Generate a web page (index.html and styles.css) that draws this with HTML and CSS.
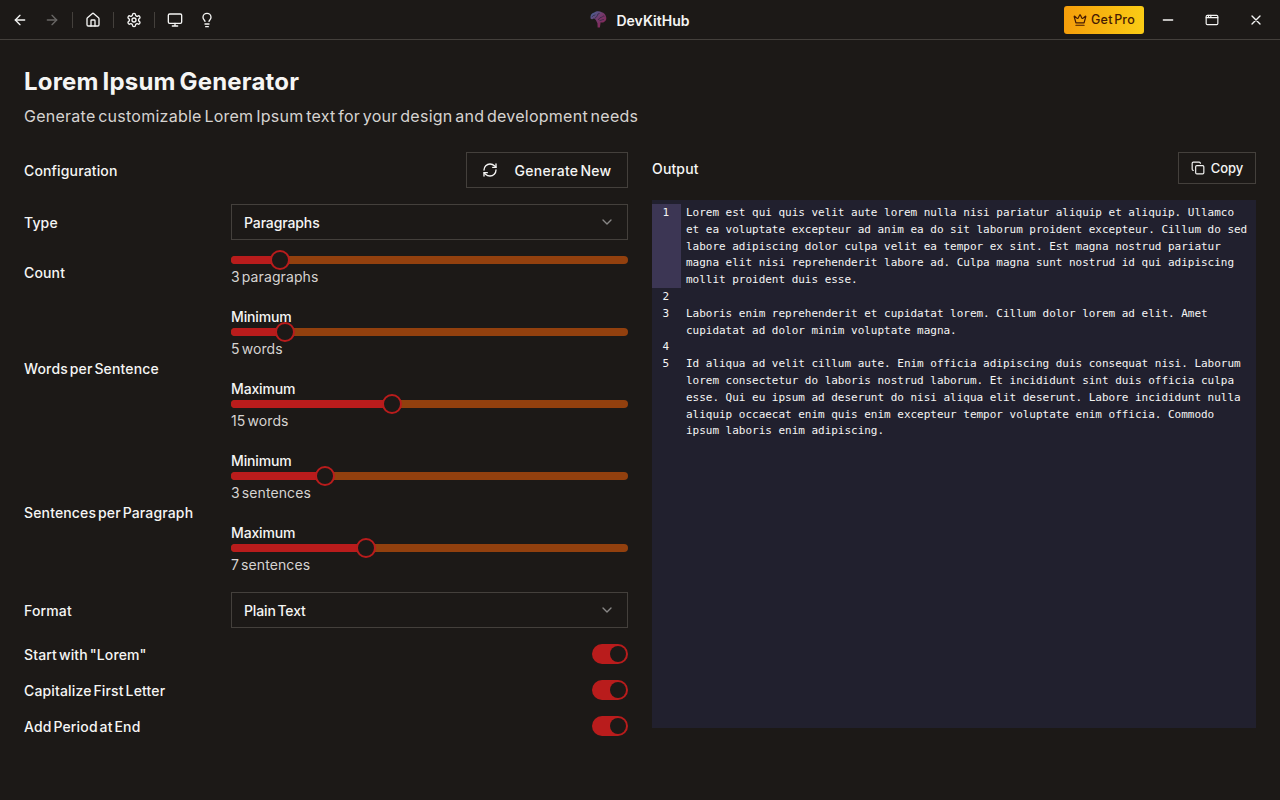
FILE: index.html
```
<!DOCTYPE html>
<html lang="en">
<head>
    <meta charset="UTF-8">
    <meta name="viewport" content="width=device-width, initial-scale=1.0">
    <title>DevKitHub</title>
    <link rel="stylesheet" href="styles.css">
</head>
<body>
    <header class="titlebar">
        <nav class="nav">
            <button class="icon-btn" aria-label="Back"><svg class="icon" viewBox="0 0 24 24"><path d="m12 19-7-7 7-7"/><path d="M19 12H5"/></svg></button>
            <button class="icon-btn disabled" aria-label="Forward"><svg class="icon" viewBox="0 0 24 24"><path d="M5 12h14"/><path d="m12 5 7 7-7 7"/></svg></button>
            <span class="divider"></span>
            <button class="icon-btn" aria-label="Home"><svg class="icon" viewBox="0 0 24 24"><path d="M15 21v-8a1 1 0 0 0-1-1h-4a1 1 0 0 0-1 1v8"/><path d="M3 10a2 2 0 0 1 .709-1.528l7-5.999a2 2 0 0 1 2.582 0l7 5.999A2 2 0 0 1 21 10v9a2 2 0 0 1-2 2H5a2 2 0 0 1-2-2z"/></svg></button>
            <span class="divider"></span>
            <button class="icon-btn" aria-label="Settings"><svg class="icon" viewBox="0 0 24 24"><path d="M12.22 2h-.44a2 2 0 0 0-2 2v.18a2 2 0 0 1-1 1.73l-.43.25a2 2 0 0 1-2 0l-.15-.08a2 2 0 0 0-2.73.73l-.22.38a2 2 0 0 0 .73 2.73l.15.1a2 2 0 0 1 1 1.72v.51a2 2 0 0 1-1 1.74l-.15.09a2 2 0 0 0-.73 2.73l.22.38a2 2 0 0 0 2.73.73l.15-.08a2 2 0 0 1 2 0l.43.25a2 2 0 0 1 1 1.73V20a2 2 0 0 0 2 2h.44a2 2 0 0 0 2-2v-.18a2 2 0 0 1 1-1.73l.43-.25a2 2 0 0 1 2 0l.15.08a2 2 0 0 0 2.73-.73l.22-.39a2 2 0 0 0-.73-2.73l-.15-.08a2 2 0 0 1-1-1.74v-.5a2 2 0 0 1 1-1.74l.15-.09a2 2 0 0 0 .73-2.73l-.22-.38a2 2 0 0 0-2.73-.73l-.15.08a2 2 0 0 1-2 0l-.43-.25a2 2 0 0 1-1-1.73V4a2 2 0 0 0-2-2z"/><circle cx="12" cy="12" r="3"/></svg></button>
            <span class="divider"></span>
            <button class="icon-btn" aria-label="Display"><svg class="icon" viewBox="0 0 24 24"><rect width="20" height="14" x="2" y="3" rx="2"/><path d="M8 21h8M12 17v4"/></svg></button>
            <button class="icon-btn" aria-label="Tips"><svg class="icon" viewBox="0 0 24 24"><path d="M15 14c.2-1 .7-1.7 1.5-2.5 1-.9 1.5-2.2 1.5-3.5A6 6 0 0 0 6 8c0 1 .2 2.2 1.5 3.5.7.7 1.3 1.5 1.5 2.5"/><path d="M9 18h6M10 22h4"/></svg></button>
        </nav>
        <div class="brand">
            <svg class="brand-logo" viewBox="0 0 16 16">
                <defs>
                    <linearGradient id="brain" x1="0" y1="0" x2="1" y2="1">
                        <stop offset="0" stop-color="#3e6a9c"/>
                        <stop offset=".45" stop-color="#743a6c"/>
                        <stop offset="1" stop-color="#8c1f50"/>
                    </linearGradient>
                </defs>
                <path fill="url(#brain)" d="M.5 7C0 4 1.500 2 4 1.500 6 0 9 0 11 1.200c2 .3 3.500 2 4 4 .8 2 .3 4-1.500 4.800-1 .9-2.500.9-3.500.6L9.300 15.500H7.200L7 11.500 5.500 8.500C4.500 7 3.500 6.500 2.600 7.500 2 8 1 7.700.5 7z"/>
                <path class="brain-folds" d="M2 5.500c1-2 2-1 3-2M5 7c0-2 2-1 2-3S9 3 9 2M7.500 8c2 0 1-2 3-2s1-2 3-1M9 9c2 0 2-1 4-1"/>
            </svg>
            <span class="label">DevKitHub</span>
        </div>
        <div class="window-controls">
            <button class="pro-btn"><svg class="icon crown" viewBox="0 0 24 24"><path d="M11.562 3.266a.5.5 0 0 1 .876 0L15.390 8.870a1 1 0 0 0 1.516.294L21.183 5.500a.5.5 0 0 1 .798.519l-2.834 10.246a1 1 0 0 1-.956.734H5.810a1 1 0 0 1-.957-.734L2.020 6.020a.5.5 0 0 1 .798-.519l4.276 3.664a1 1 0 0 0 1.516-.294z"/><path d="M5 21h14"/></svg><span>Get Pro</span></button>
            <button class="win-btn" aria-label="Minimize"><svg class="icon" viewBox="0 0 24 24"><path d="M5 12h14"/></svg></button>
            <button class="win-btn" aria-label="Maximize"><svg class="icon small" viewBox="0 0 24 24"><rect x="2" y="4" width="20" height="16" rx="2"/><path d="M10 4v4M2 8h20M6 4v4"/></svg></button>
            <button class="win-btn" aria-label="Close"><svg class="icon" viewBox="0 0 24 24"><path d="M18 6 6 18M6 6l12 12"/></svg></button>
        </div>
    </header>

    <main class="page">
        <h1>Lorem Ipsum Generator</h1>
        <p class="description">Generate customizable Lorem Ipsum text for your design and development needs</p>

        <div class="columns">
            <section class="config">
                <div class="config-header">
                    <span class="label">Configuration</span>
                    <button class="btn generate"><svg class="icon" viewBox="0 0 24 24"><path d="M3 12a9 9 0 0 1 9-9 9.750 9.750 0 0 1 6.740 2.740L21 8"/><path d="M21 3v5h-5"/><path d="M21 12a9 9 0 0 1-9 9 9.750 9.750 0 0 1-6.740-2.740L3 16"/><path d="M8 16H3v5"/></svg><span class="label">Generate New</span></button>
                </div>
                <div class="row">
                    <label class="label">Type</label>
                    <div class="select"><span class="label">Paragraphs</span><svg class="icon chevron" viewBox="0 0 24 24"><path d="m6 9 6 6 6-6"/></svg></div>
                </div>
                <div class="row">
                    <label class="label">Count</label>
                    <div class="field">
                        <div class="slider" style="--value: 12.4%"><div class="range"></div><div class="thumb"></div></div>
                        <p class="label hint">3 paragraphs</p>
                    </div>
                </div>
                <div class="row">
                    <label class="label">Words per Sentence</label>
                    <div class="field-group">
                        <div class="field">
                            <label class="label">Minimum</label>
                            <div class="slider" style="--value: 13.6%"><div class="range"></div><div class="thumb"></div></div>
                            <p class="label hint">5 words</p>
                        </div>
                        <div class="field">
                            <label class="label">Maximum</label>
                            <div class="slider" style="--value: 40.6%"><div class="range"></div><div class="thumb"></div></div>
                            <p class="label hint">15 words</p>
                        </div>
                    </div>
                </div>
                <div class="row">
                    <label class="label">Sentences per Paragraph</label>
                    <div class="field-group">
                        <div class="field">
                            <label class="label">Minimum</label>
                            <div class="slider" style="--value: 23.6%"><div class="range"></div><div class="thumb"></div></div>
                            <p class="label hint">3 sentences</p>
                        </div>
                        <div class="field">
                            <label class="label">Maximum</label>
                            <div class="slider" style="--value: 34%"><div class="range"></div><div class="thumb"></div></div>
                            <p class="label hint">7 sentences</p>
                        </div>
                    </div>
                </div>
                <div class="row">
                    <label class="label">Format</label>
                    <div class="select"><span class="label">Plain Text</span><svg class="icon chevron" viewBox="0 0 24 24"><path d="m6 9 6 6 6-6"/></svg></div>
                </div>
                <div class="switch-row"><label class="label">Start with "Lorem"</label><div class="switch"><div class="knob"></div></div></div>
                <div class="switch-row"><label class="label">Capitalize First Letter</label><div class="switch"><div class="knob"></div></div></div>
                <div class="switch-row"><label class="label">Add Period at End</label><div class="switch"><div class="knob"></div></div></div>
            </section>

            <section class="output">
                <div class="output-header">
                    <span class="label">Output</span>
                    <button class="btn copy"><svg class="icon small" viewBox="0 0 24 24"><rect width="14" height="14" x="8" y="8" rx="2"/><path d="M4 16c-1.100 0-2-.9-2-2V4c0-1.100.9-2 2-2h10c1.100 0 2 .9 2 2"/></svg><span>Copy</span></button>
                </div>
                <div class="editor">
                    <div class="line active"><div class="num">1</div><div class="code">Lorem est qui quis velit aute lorem nulla nisi pariatur aliquip et aliquip. Ullamco
et ea voluptate excepteur ad anim ea do sit laborum proident excepteur. Cillum do sed
labore adipiscing dolor culpa velit ea tempor ex sint. Est magna nostrud pariatur
magna elit nisi reprehenderit labore ad. Culpa magna sunt nostrud id qui adipiscing
mollit proident duis esse.</div></div>
                    <div class="line"><div class="num">2</div><div class="code"></div></div>
                    <div class="line"><div class="num">3</div><div class="code">Laboris enim reprehenderit et cupidatat lorem. Cillum dolor lorem ad elit. Amet
cupidatat ad dolor minim voluptate magna.</div></div>
                    <div class="line"><div class="num">4</div><div class="code"></div></div>
                    <div class="line"><div class="num">5</div><div class="code">Id aliqua ad velit cillum aute. Enim officia adipiscing duis consequat nisi. Laborum
lorem consectetur do laboris nostrud laborum. Et incididunt sint duis officia culpa
esse. Qui eu ipsum ad deserunt do nisi aliqua elit deserunt. Labore incididunt nulla
aliquip occaecat enim quis enim excepteur tempor voluptate enim officia. Commodo
ipsum laboris enim adipiscing.</div></div>
                </div>
            </section>
        </div>
    </main>
</body>
</html>
```
FILE: styles.css
```
* {
    box-sizing: border-box;
}
body {
    margin: 0;
    height: 100vh;
    overflow: hidden;
    background-color: #1c1917;
    color: #f5f5f4;
    font-family: Inter, "Open Sans", sans-serif;
    font-size: 14px;
    font-weight: 500;
    line-height: 24px;
    word-spacing: -2px;
}
h1, p {
    margin: 0;
}
button {
    font: inherit;
    color: inherit;
    word-spacing: inherit;
    background: none;
    border: none;
    padding: 0;
    display: flex;
    align-items: center;
    justify-content: center;
}
.icon {
    width: 16px;
    height: 16px;
    flex-shrink: 0;
    fill: none;
    stroke: currentColor;
    stroke-width: 2;
    stroke-linecap: round;
    stroke-linejoin: round;
}
.icon.small {
    width: 14px;
    height: 14px;
}
.label {
    padding-top: 2px;
    line-height: 22px;
    letter-spacing: 0.15px;
}
.titlebar {
    display: grid;
    grid-template-columns: 1fr auto 1fr;
    align-items: center;
    height: 40px;
    border-bottom: 1px solid #44403c;
}
.nav {
    display: flex;
    align-items: center;
    padding-left: 4px;
}
.icon-btn {
    width: 32px;
    height: 32px;
}
.icon-btn.disabled {
    opacity: 0.35;
}
.divider {
    width: 1px;
    height: 16px;
    margin: 0 4px;
    background-color: #44403c;
}
.brand {
    display: flex;
    align-items: center;
    gap: 9px;
    font-weight: 600;
}
.brand .label {
    letter-spacing: 0.05px;
}
.brand-logo {
    width: 17px;
    height: 17px;
}
.brain-folds {
    fill: none;
    stroke: #27293f;
    stroke-width: 0.7;
}
.window-controls {
    display: flex;
    align-items: center;
    justify-content: flex-end;
    padding-right: 2px;
}
.win-btn {
    width: 44px;
    height: 32px;
}
.pro-btn {
    width: 80px;
    height: 28px;
    gap: 4px;
    margin-right: 2px;
    border-radius: 3px;
    background: linear-gradient(to right, #f59e0b, #facc15);
    color: #451a03;
    font-size: 12.5px;
    letter-spacing: 0.2px;
}
.crown {
    width: 14px;
    height: 14px;
}
.page {
    padding: 24px;
}
h1 {
    padding-top: 3px;
    font-size: 24px;
    font-weight: 700;
    letter-spacing: 0.19px;
    line-height: 29px;
}
.description {
    margin-top: 8px;
    color: #d6d3d1;
    font-size: 16px;
    font-weight: 400;
    letter-spacing: 0.25px;
}
.columns {
    display: grid;
    grid-template-columns: 1fr 1fr;
    gap: 24px;
    margin-top: 24px;
}
.config {
    display: flex;
    flex-direction: column;
    gap: 16px;
}
.config-header, .output-header {
    display: flex;
    align-items: center;
    justify-content: space-between;
}
.btn {
    border: 1px solid #44403c;
}
.generate {
    width: 162px;
    height: 36px;
    gap: 16px;
}
.generate .label {
    letter-spacing: 0.3px;
}
.copy {
    width: 78px;
    height: 32px;
    gap: 6px;
    font-size: 13px;
}
.row {
    display: grid;
    grid-template-columns: 207px 1fr;
    align-items: center;
}
.select {
    display: flex;
    align-items: center;
    justify-content: space-between;
    height: 36px;
    padding: 0 12px;
    border: 1px solid #44403c;
}
.select .label {
    letter-spacing: -0.12px;
}
.chevron {
    opacity: 0.5;
}
.field .label {
    display: block;
    letter-spacing: -0.15px;
}
.field .hint {
    color: #d6d3d1;
    font-weight: 400;
    letter-spacing: 0.1px;
}
.field-group {
    display: grid;
    gap: 16px;
}
.slider {
    position: relative;
    height: 8px;
    border-radius: 4px;
    background-color: #92400e;
}
.range {
    width: var(--value);
    height: 100%;
    border-radius: 4px 0 0 4px;
    background-color: #b91c1c;
}
.thumb {
    position: absolute;
    top: -6px;
    left: var(--value);
    width: 20px;
    height: 20px;
    margin-left: -10px;
    border: 2px solid #b91c1c;
    border-radius: 50%;
    background-color: #1c1917;
}
.switch-row {
    display: flex;
    align-items: center;
    justify-content: space-between;
    height: 20px;
}
.switch {
    display: flex;
    align-items: center;
    justify-content: flex-end;
    width: 36px;
    height: 20px;
    padding: 2px;
    border-radius: 10px;
    background-color: #b91c1c;
}
.knob {
    width: 16px;
    height: 16px;
    border-radius: 50%;
    background-color: #1c1917;
}
.output {
    display: flex;
    flex-direction: column;
    gap: 16px;
}
.output-header .btn {
    word-spacing: 0;
}
.editor {
    height: 528px;
    padding-top: 5px;
    background-color: #21202e;
    font-family: "DejaVu Sans Mono", monospace;
    font-size: 11px;
    font-weight: 400;
    letter-spacing: -0.02px;
    line-height: 16.8px;
    word-spacing: 0;
}
.line {
    display: flex;
    min-height: 16.8px;
}
.num {
    width: 29px;
    padding-right: 12px;
    text-align: right;
}
/* keep the highlight flush with the editor padding */
.active .num {
    margin: -1px 0 1px;
    padding-top: 1px;
    background-color: #3c3654;
}
.code {
    padding-left: 5px;
    white-space: pre;
}
```
